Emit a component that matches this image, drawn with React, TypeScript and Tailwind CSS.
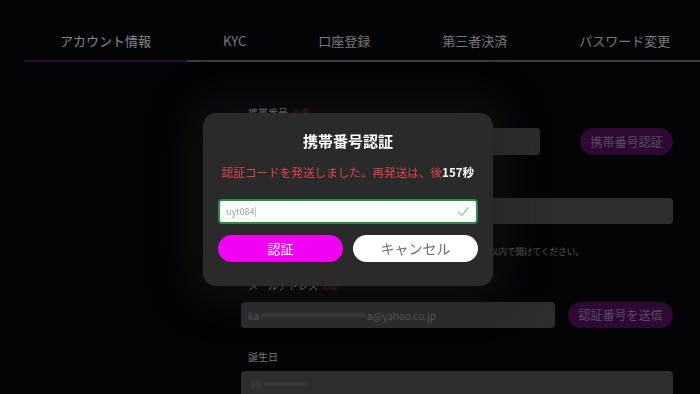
import React from "react";

const font = { fontFamily: '"Noto Sans CJK JP", "Noto Sans", sans-serif' };

function Tabs() {
  const tabs = ["アカウント情報", "KYC", "口座登録", "第三者決済", "パスワード変更"];
  return (
    <div className="ml-[24px] flex border-b-2 border-[#3c3c3e] pt-[30px] whitespace-nowrap">
      {tabs.map((t, i) => (
        <div
          key={t}
          className={
            "px-[36px] pb-[8px] text-[13px] leading-[22px] -mb-[2px] border-b-2 " +
            (i === 0 ? "border-[#2b0c38] text-[#878787]" : "border-transparent text-[#79797b]")
          }
        >
          {t}
        </div>
      ))}
    </div>
  );
}

function Label({ text, req }: { text: string; req?: boolean }) {
  return (
    <div className="pl-[7px] text-[10px] leading-[16px] text-[#7a7a7c] flex gap-[4px] items-center">
      <span>{text}</span>
      {req && <span className="text-[8px] text-[#5c1822]">必須</span>}
    </div>
  );
}

function Form() {
  return (
    <div className="ml-[241px] w-[432px] pt-[43px]">
      <Label text="携帯番号" req />
      <div className="mt-[7px] flex items-center justify-between">
        <div className="h-[27px] w-[299px] rounded-[4px] bg-[#2d2d2f]" />
        <div className="h-[27px] w-[93px] rounded-full bg-[#2e0934] text-[12px] text-[#5c4c63] flex items-center justify-center">
          携帯番号認証
        </div>
      </div>
      <div className="mt-[20px]">
        <Label text="認証番号" req />
      </div>
      <div className="mt-[7px] h-[26px] rounded-[4px] bg-[#2d2d2f]" />
      <div className="mt-[20px] pl-[7px] text-[8.6px] leading-[14px] text-[#5a5a5c] whitespace-nowrap">
        ※SMSの認証コードを受信後、ご本人様確認のため、必ず10分以内で開けてください。
      </div>
      <div className="mt-[20px]">
        <Label text="メールアドレス" req />
      </div>
      <div className="mt-[8px] flex items-center justify-between">
        <div className="h-[26px] w-[314px] rounded-[4px] bg-[#2d2d2f] flex items-center pl-[7px] text-[10px] text-[#58585a]">
          <span>ka</span>
          <div className="mx-[2px] h-[2px] w-[104px] bg-[#48484a] blur-[1px]" />
          <span>a@yahoo.co.jp</span>
        </div>
        <div className="h-[26px] w-[105px] rounded-full bg-[#2e0934] text-[12px] text-[#5c4c63] flex items-center justify-center">
          認証番号を送信
        </div>
      </div>
      <div className="mt-[21px]">
        <Label text="誕生日" />
      </div>
      <div className="mt-[6px] h-[26px] rounded-[4px] bg-[#2d2d2f] flex items-center pl-[9px] text-[10px] text-[#505052]">
        <span className="blur-[1px]">19</span>
        <div className="ml-[2px] h-[2px] w-[44px] bg-[#444446] blur-[1px]" />
      </div>
    </div>
  );
}

function Modal() {
  return (
    <div className="fixed inset-0 flex items-center justify-center">
      <div className="mt-[5px] mr-[4px] w-[290px] rounded-[13px] bg-[#2a2a2a] px-[15px] pt-[18px] pb-[24px] shadow-[0_0_40px_12px_rgba(30,30,34,0.45)]">
        <div className="text-center text-[15px] leading-[20px] font-bold text-white">携帯番号認証</div>
        <div className="mt-[13px] text-center text-[11.6px] leading-[16px] text-[#e0444f] whitespace-nowrap">
          認証コードを発送しました。再発送は、後<span className="font-bold text-white">157秒</span>
        </div>
        <div className="mt-[19px] h-[25px] rounded-[4px] border-2 border-[#2f8a48] bg-white flex items-center justify-between pl-[6px] pr-[6px]">
          <span className="text-[9px] text-[#a0a0a0] blur-[0.7px]">uyt084|</span>
          <svg width="13" height="13" viewBox="0 0 24 24" fill="none" stroke="#7fc79d" strokeWidth="2" strokeLinecap="round" strokeLinejoin="round">
            <polyline points="3 13 9 19 21 5" />
          </svg>
        </div>
        <div className="mt-[11px] flex gap-[10px]">
          <div className="h-[27px] flex-1 rounded-full bg-[#f200f2] flex items-center justify-center text-[13px] text-white">
            認証
          </div>
          <div className="h-[27px] flex-1 rounded-full bg-white flex items-center justify-center text-[14px] text-[#6e6e6e]">
            キャンセル
          </div>
        </div>
      </div>
    </div>
  );
}

export default function App() {
  return (
    <div className="relative h-[394px] w-[700px] overflow-hidden bg-[#040406]" style={font}>
      <Tabs />
      <Form />
      <Modal />
    </div>
  );
}
